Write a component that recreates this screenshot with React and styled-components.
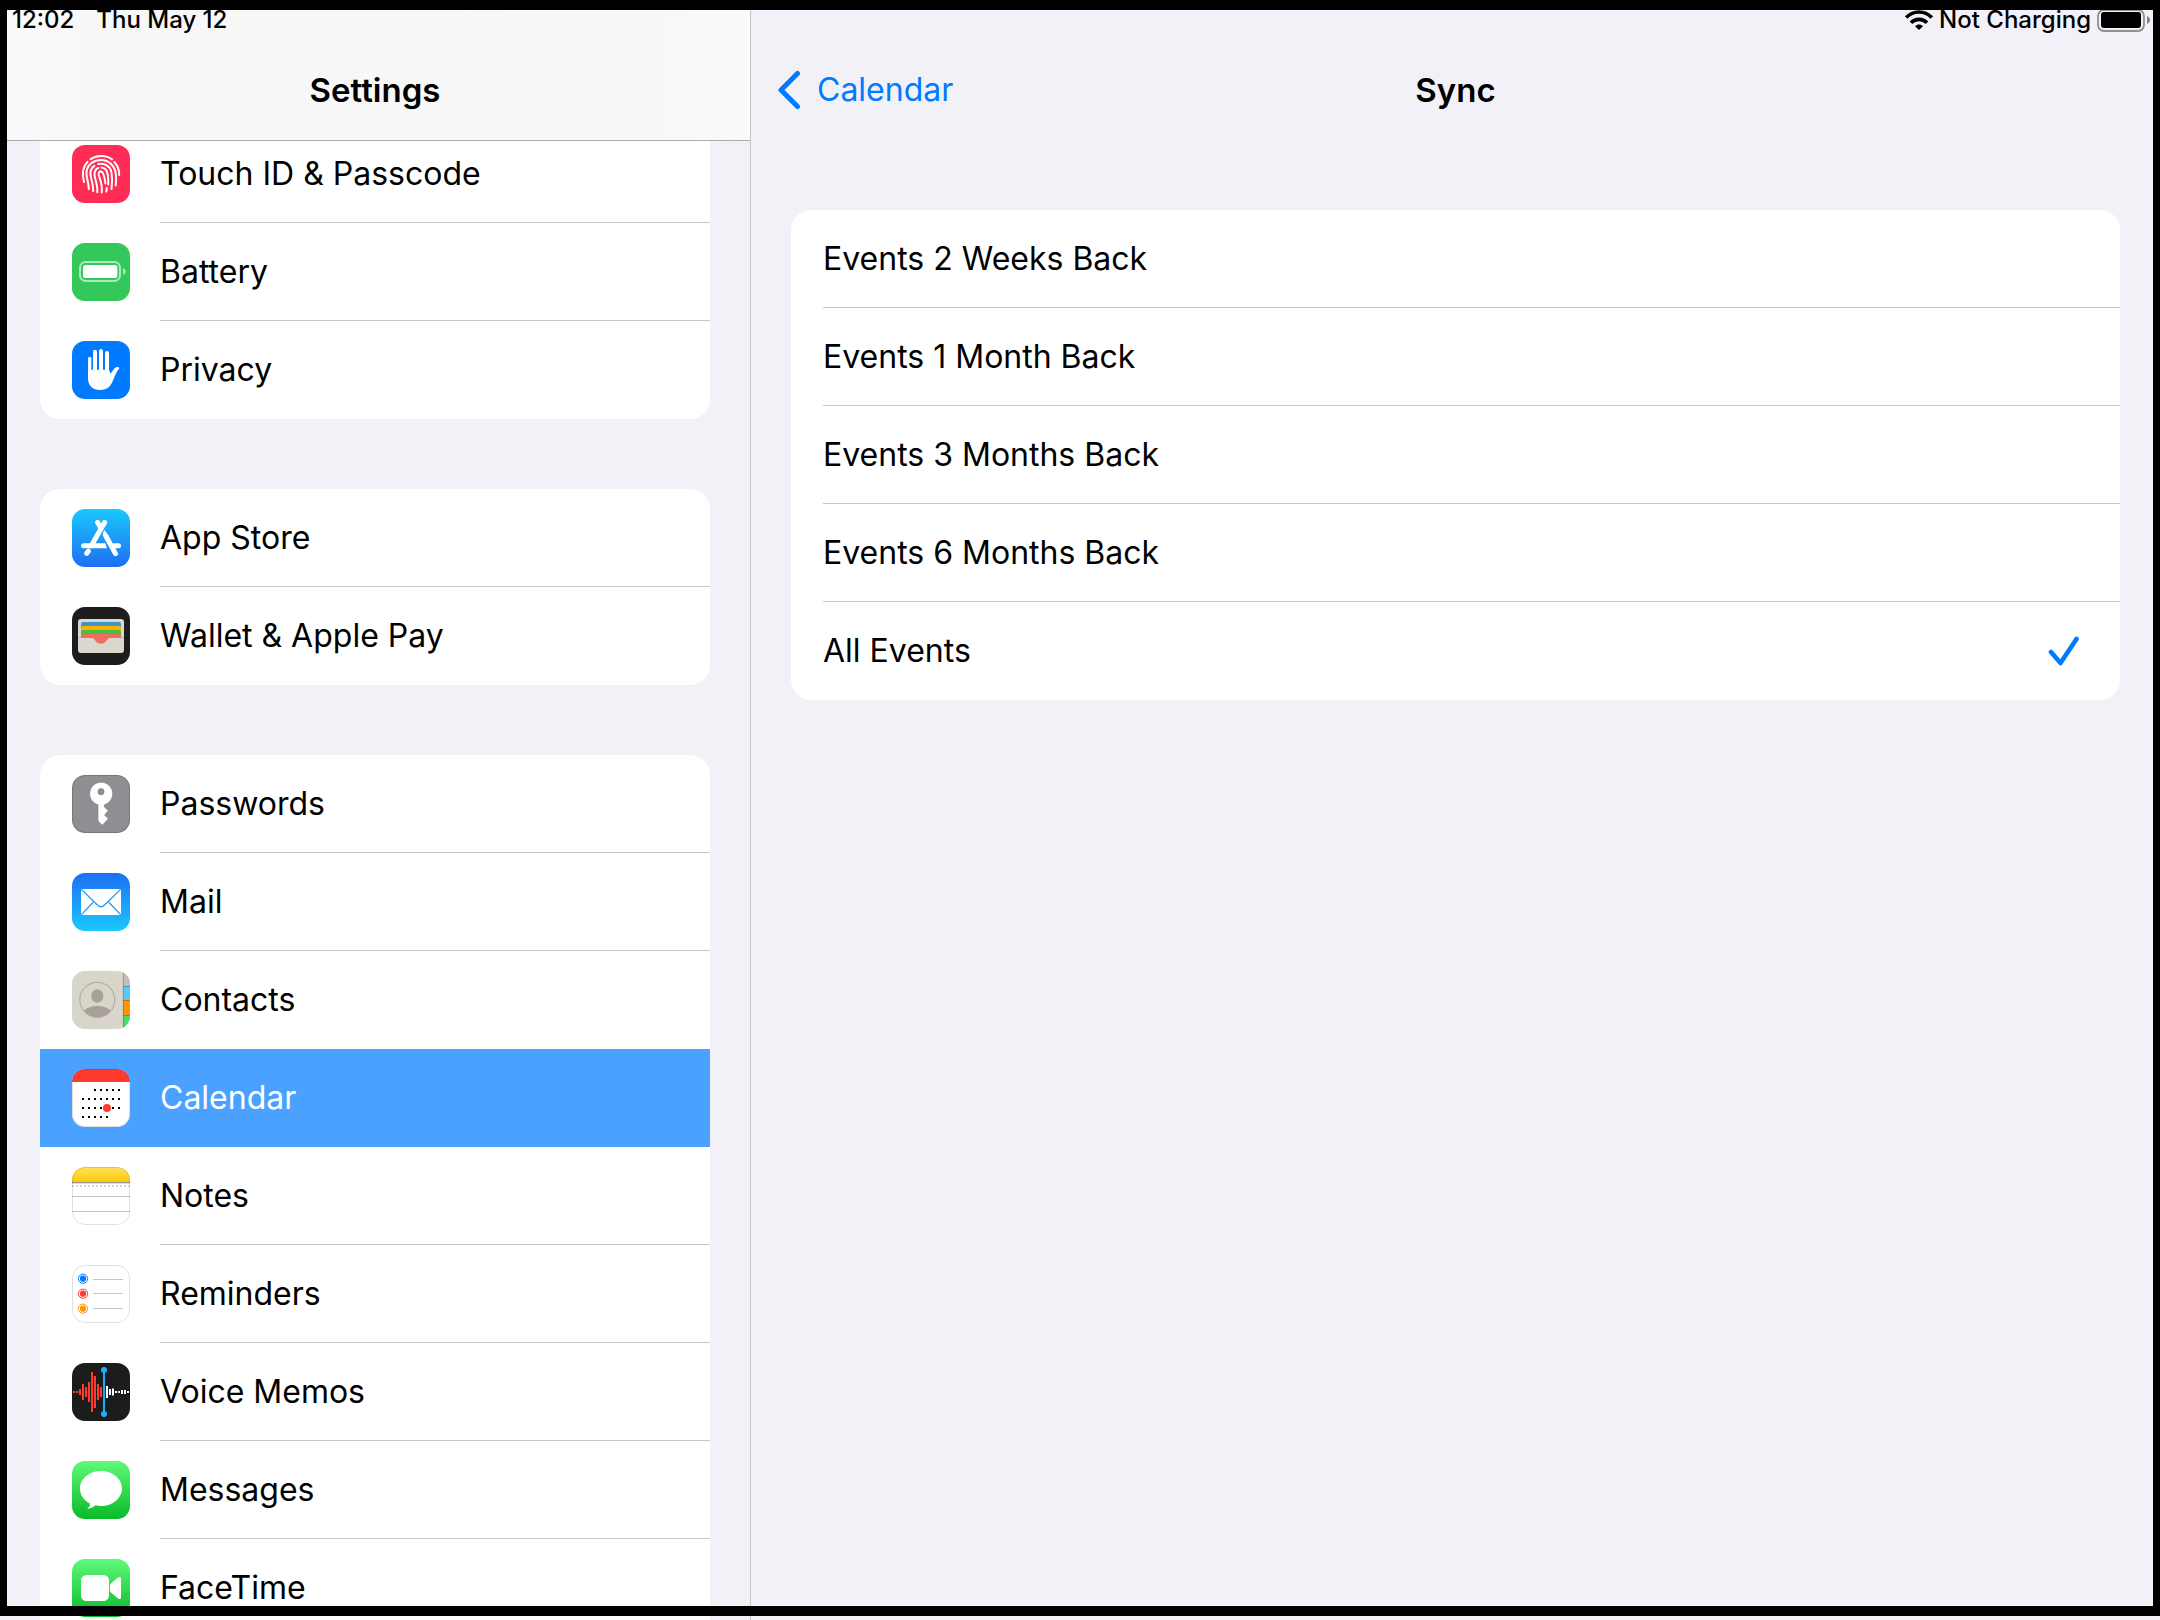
import React, { useState } from "react";
import styled, { createGlobalStyle } from "styled-components";

const GlobalStyle = createGlobalStyle`
  *, *::before, *::after { box-sizing: border-box; }
  body {
    margin: 0;
    background: #f2f1f7;
    color: #000;
    font-family: Inter, "Liberation Sans", sans-serif;
    font-size: 32px;
    line-height: 40px;
  }
`;

const Screen = styled.div`
  display: grid;
  grid-template-columns: 751px minmax(0, 1fr);
  height: 100vh;
  overflow: hidden;
`;

const Bezel = styled.div`
  position: fixed;
  inset: 0 0 4px;
  z-index: 2;
  border: solid #000;
  border-width: 10px 7px;
  pointer-events: none;
`;

const Sidebar = styled.aside`
  display: flex;
  flex-direction: column;
  min-height: 0;
  border-right: 1px solid #c6c6c8;
`;

const SidebarHeader = styled.header`
  flex: none;
  background: linear-gradient(90deg, #fafafd, #f7f7f7 16%, #f8f8f8 88%, #fafafb);
  border-bottom: 1px solid #adadb0;
`;

const StatusBar = styled.div`
  display: flex;
  align-items: center;
  justify-content: ${(p) => (p.$end ? "flex-end" : "flex-start")};
  gap: ${(p) => (p.$end ? "6px" : "22px")};
  height: 40px;
  padding: 0 ${(p) => (p.$end ? "9px" : "12px")};
  font-size: 24px;
  font-weight: 500;
  line-height: 40px;
  white-space: nowrap;
`;

const NavBar = styled.div`
  display: grid;
  grid-template-columns: 1fr auto 1fr;
  align-items: center;
  height: 100px;
  padding: 0 26px;
`;

const Title = styled.h1`
  grid-column: 2;
  margin: 0;
  font-size: 33px;
  font-weight: 600;
  line-height: 40px;
`;

const BackLink = styled.a`
  display: flex;
  align-items: center;
  gap: 16px;
  color: #007aff;
  text-decoration: none;
`;

const ScrollArea = styled.nav`
  flex: 1;
  min-height: 0;
  overflow: hidden;
`;

const Groups = styled.div`
  display: flex;
  flex-direction: column;
  gap: 70px;
  margin-top: -16px;
  padding: 0 40px;
`;

const Card = styled.div`
  overflow: hidden;
  background: #fff;
  border-radius: ${(p) => (p.$continued ? "0 0 20px 20px" : "20px")};
`;

const Label = styled.span`
  display: flex;
  flex: 1;
  align-items: center;
  align-self: stretch;
  border-bottom: 1px solid #c6c6c8;
`;

const MenuLink = styled.a`
  display: flex;
  align-items: center;
  gap: 30px;
  height: 98px;
  padding-left: 32px;
  color: ${(p) => (p.$selected ? "#fff" : "#000")};
  background: ${(p) => (p.$selected ? "#4ba1ff" : "transparent")};
  text-decoration: none;

  ${Label} {
    border-bottom-color: ${(p) => (p.$plain ? "transparent" : "#c6c6c8")};
  }
`;

const Detail = styled.main`
  min-width: 0;
`;

const OptionList = styled.fieldset`
  margin: 70px 40px 0;
  padding: 0;
  overflow: hidden;
  background: #fff;
  border: 0;
  border-radius: 20px;
`;

const Check = styled.svg`
  width: 32px;
  height: 32px;
  margin-left: auto;
  visibility: hidden;
`;

const Radio = styled.input`
  position: absolute;
  opacity: 0;
  pointer-events: none;

  &:checked + ${Label} ${Check} {
    visibility: visible;
  }
`;

const Option = styled.label`
  position: relative;
  display: flex;
  height: 98px;
  padding-left: 32px;

  ${Label} {
    padding-right: 40px;
  }

  &:last-child ${Label} {
    border-bottom-color: transparent;
  }
`;

const IconSvg = styled.svg`
  flex: none;
  width: 58px;
  height: 58px;
  border-radius: 13px;
`;

function Tile({ id, fill, from, to, edge, children }) {
  return (
    <IconSvg viewBox="0 0 58 58" aria-hidden="true">
      {from && (
        <defs>
          <linearGradient id={id} x1="0" y1="0" x2="0" y2="1">
            <stop offset="0" stopColor={from} />
            <stop offset="1" stopColor={to} />
          </linearGradient>
        </defs>
      )}
      <rect width="58" height="58" fill={from ? `url(#${id})` : fill} />
      {children}
      {edge && (
        <rect x="0.5" y="0.5" width="57" height="57" rx="12.5" fill="none" stroke="#000" strokeOpacity={edge} />
      )}
    </IconSvg>
  );
}

const TouchIdIcon = () => (
  <Tile fill="#ff2d55">
    <g fill="none" stroke="#fff" strokeWidth="2" strokeLinecap="round">
      <path d="M18.5 14.2C25 9.8 34 9.8 40 14.4" />
      <path d="M15.6 16.8C11 21.5 9.6 28 12 37" />
      <path d="M42.4 17C45.5 20.5 47.3 25 47.2 30" />
      <path d="M16.8 44C16.6 36 13.6 31.5 14.6 26C16 19 22 15 29 15C37 15 43 21 43.8 29C44.2 33 44.2 37 43.7 40.5" />
      <path d="M21.2 46C21.6 38 17.5 32 18.6 26.5C19 24 20.3 22.2 22.4 20.8" />
      <path d="M26 19.1C32 17.5 38 21 39.4 27C40.3 32 40.3 38 39.5 44" />
      <path d="M25.2 47.2C26.2 39 21.8 33 22.6 28C23.2 24.6 24.8 23.2 26.4 22.9M29.5 22.6C33.4 22.8 35.2 26 35.8 30C36.3 33.5 36.4 36.5 36.2 39.5" />
      <path d="M29.7 47.4C30.8 40 28.4 35 26.7 30C26.2 27.3 27.7 26.2 29.2 26.4C31.8 27 32.8 33.5 33.4 38.5" />
      <path d="M34.8 43L34.3 46.5" />
    </g>
  </Tile>
);

const BatteryIcon = () => (
  <Tile fill="#34c759">
    <rect x="8" y="19" width="40" height="19" rx="5.5" fill="none" stroke="#fff" strokeOpacity="0.6" strokeWidth="2" />
    <rect x="11" y="22" width="34.4" height="13" rx="2.6" fill="#fff" />
    <path d="M51 25C54.6 26.5 54.6 30.5 51 32Z" fill="#fff" fillOpacity="0.6" />
  </Tile>
);

const PrivacyIcon = () => (
  <Tile fill="#007aff">
    <g stroke="#fff" strokeLinecap="round" fill="none">
      <path d="M17.7 17.5V32" strokeWidth="3.3" />
      <path d="M23 10.8V34M29 10V34M35 12V34" strokeWidth="4" />
    </g>
    <path
      fill="#fff"
      d="M16 28.8H37L38.4 32.7L42.4 27.6C44 25.8 46.6 25.4 47.4 27.2C44.5 30.5 43.2 34.3 41.3 38.8C38.6 45.6 35.2 49 28.6 49C20.3 49 16 44.6 16 37Z"
    />
  </Tile>
);

const AppStoreIcon = () => (
  <Tile id="appstore" from="#1ac8fc" to="#1e6ff1">
    <g stroke="#fff" strokeWidth="5" strokeLinecap="round" fill="none">
      <path d="M25.6 13.4L28.6 18.5" />
      <path d="M32.6 13.4L20 35.5" />
      <path d="M11.6 36.7H20" />
      <path d="M42 36.7H46.5" />
      <path d="M34.6 28.2L43.5 44.6" />
      <path d="M14.6 44.4L16.4 42.2" />
    </g>
    <path fill="#fff" d="M18 34.2H33.4L34.9 39.2H18ZM32.5 21L37 27.4L33 30.5L30.7 26.2Q30.8 23 32.5 21Z" />
  </Tile>
);

const WalletIcon = () => (
  <Tile fill="#1d1d1d">
    <rect x="6" y="12" width="46" height="34" rx="3" fill="#dad7cc" />
    <path d="M9 31V17Q9 15 11 15H47Q49 15 49 17V31Z" fill="#3b99c9" />
    <path d="M9 31V21Q9 19 11 19H47Q49 19 49 21V31Z" fill="#ffb003" />
    <path d="M9 31V25Q9 23 11 23H47Q49 23 49 25V31Z" fill="#45c03f" />
    <path d="M9 31V29Q9 27 11 27H47Q49 27 49 29V31H38C34.6 31.4 34.4 36.8 29 36.8C23.6 36.8 23.4 31.4 20 31Z" fill="#f26d5f" />
    <path d="M6 30.5H9M49 30.5H52" stroke="#b9b6ab" />
  </Tile>
);

const PasswordsIcon = () => (
  <Tile fill="#8e8e93" edge="0.16">
    <path
      fill="#fff"
      fillRule="evenodd"
      stroke="#7d7d82"
      strokeWidth="0.6"
      d="M26 29.8A11.5 11.5 0 1 1 32.3 29.8V32L36.3 35.6L32.6 40L36.3 43.8L30.3 50.2L26 46ZM29 13.6A3.1 3.1 0 1 0 29 19.8A3.1 3.1 0 1 0 29 13.6Z"
    />
  </Tile>
);

const MailIcon = () => (
  <Tile id="mail" from="#1e6ff2" to="#1ac8fe">
    <rect x="9" y="16" width="40" height="26" rx="1" fill="#fff" />
    <g fill="none" stroke="#2196f8" strokeWidth="1.3">
      <path d="M9.4 16.4L24.6 31.2C27.6 34.8 30.4 34.8 33.4 31.2L48.6 16.4" />
      <path d="M9.4 41.6L21.2 29.2M48.6 41.6L36.8 29.2" />
    </g>
  </Tile>
);

const ContactsIcon = () => (
  <Tile fill="#d8d5cb">
    <defs>
      <clipPath id="avatar">
        <circle cx="25.3" cy="28.8" r="17.5" />
      </clipPath>
    </defs>
    <circle cx="25.3" cy="28.8" r="17.5" fill="none" stroke="#aca299" />
    <ellipse cx="25.3" cy="25" rx="6.1" ry="6.8" fill="#a9a09a" />
    <ellipse cx="25.3" cy="44" rx="15" ry="9.2" fill="#a9a09a" clipPath="url(#avatar)" />
    <rect x="51" width="7" height="15" fill="#c2beb8" />
    <rect x="51" y="15" width="7" height="14" fill="#5ac8fa" />
    <rect x="51" y="29" width="7" height="15" fill="#ff9500" />
    <rect x="51" y="44" width="7" height="14" fill="#4cd964" />
    <path d="M51 15.4H58M51 29.4H58M51 44.4H58M51.3 0V58" stroke="#000" strokeOpacity="0.28" strokeWidth="0.8" />
  </Tile>
);

const calendarDots = [
  [21, [23, 29, 35, 41, 47]],
  [30, [11, 17, 23, 29, 35, 41, 47]],
  [39, [11, 17, 23, 29, 35, 41, 47]],
  [48, [11, 17, 23, 29, 35]],
];

const CalendarIcon = () => (
  <Tile fill="#fff" edge="0.12">
    <rect width="58" height="13" fill="#ff3b30" />
    {calendarDots.map(([y, xs]) =>
      xs.map((x) => <rect key={`${x}-${y}`} x={x - 1} y={y - 1} width="2" height="2" />)
    )}
    <circle cx="35" cy="39" r="4" fill="#ff3b30" />
  </Tile>
);

const NotesIcon = () => (
  <Tile fill="#fff" edge="0.12">
    <defs>
      <linearGradient id="notes" x1="0" y1="0" x2="0" y2="1">
        <stop offset="0" stopColor="#ffdf5e" />
        <stop offset="1" stopColor="#ffcc05" />
      </linearGradient>
    </defs>
    <rect width="58" height="15" fill="url(#notes)" />
    <rect y="15" width="58" height="1" fill="#99958a" />
    <rect y="16" width="58" height="1" fill="#dcdcdc" />
    <path d="M0 19H58" stroke="#d6d6d6" strokeWidth="2" strokeDasharray="2 2" />
    <path d="M0 29.5H58M0 44.5H58" stroke="#c4c4c6" />
  </Tile>
);

const RemindersIcon = () => (
  <Tile fill="#fff" edge="0.12">
    {[
      [13.7, 14.5, "#007aff"],
      [28.7, 28.5, "#ff3b30"],
      [43.7, 43.5, "#ff9500"],
    ].map(([y, line, color]) => (
      <g key={color}>
        <circle cx="11" cy={y} r="4.6" fill="none" stroke={color} />
        <circle cx="11" cy={y} r="3.1" fill={color} />
        <path d={`M21 ${line}H51`} stroke="#c6c6c8" />
      </g>
    ))}
  </Tile>
);

const playedBars = [1, 1, 3, 8, 5, 10, 20, 16, 8, 5];
const restBars = [6, 3, 3.5, 1, 1, 2, 2, 1];

const VoiceMemosIcon = () => (
  <Tile fill="#1c1c1c">
    {playedBars.map((h, i) => (
      <rect key={i} x={1 + i * 3} y={29 - h} width="2" height={h * 2} fill="#ff3b30" />
    ))}
    {restBars.map((h, i) => (
      <rect key={i} x={34 + i * 3} y={29 - h} width="2" height={h * 2} fill="#fff" />
    ))}
    <rect x="31" y="7" width="2" height="44" fill="#1badf8" />
    <circle cx="32" cy="7" r="3" fill="#1badf8" />
    <circle cx="32" cy="51" r="3" fill="#1badf8" />
  </Tile>
);

const MessagesIcon = () => (
  <Tile id="messages" from="#5ff97a" to="#0aba28">
    <path
      fill="#fff"
      d="M29 10C40.6 10 50 17.7 50 27.4C50 37.1 40.6 44.9 29 44.9C27 44.9 25.2 44.7 23.5 44.3C21 46.5 18.5 47.8 15.2 47.9C17 46.4 18 44.6 18 42.4C11.8 39.3 8 33.8 8 27.4C8 17.7 17.4 10 29 10Z"
    />
  </Tile>
);

const FaceTimeIcon = () => (
  <Tile id="facetime" from="#5ff97a" to="#0aba28">
    <rect x="9" y="16" width="28" height="26" rx="5.5" fill="#fff" />
    <path fill="#fff" d="M38 26.5Q38 25.4 39 24.5L46 18.5Q49 16.8 49 19.8V38.2Q49 41.2 46 39.5L39 33.5Q38 32.6 38 31.5Z" />
  </Tile>
);

const groups = [
  [
    ["Touch ID & Passcode", TouchIdIcon],
    ["Battery", BatteryIcon],
    ["Privacy", PrivacyIcon],
  ],
  [
    ["App Store", AppStoreIcon],
    ["Wallet & Apple Pay", WalletIcon],
  ],
  [
    ["Passwords", PasswordsIcon],
    ["Mail", MailIcon],
    ["Contacts", ContactsIcon],
    ["Calendar", CalendarIcon],
    ["Notes", NotesIcon],
    ["Reminders", RemindersIcon],
    ["Voice Memos", VoiceMemosIcon],
    ["Messages", MessagesIcon],
    ["FaceTime", FaceTimeIcon],
  ],
];

const selectedItem = "Calendar";

const syncOptions = [
  "Events 2 Weeks Back",
  "Events 1 Month Back",
  "Events 3 Months Back",
  "Events 6 Months Back",
  "All Events",
];

const WifiGlyph = () => (
  <svg width="28" height="20" viewBox="0 0 28 20" aria-hidden="true">
    <g fill="none" stroke="#000" strokeWidth="3.6">
      <path d="M1.2 7.6C8.2 0.2 19.8 0.2 26.8 7.6" />
      <path d="M6 12.8C10.4 8.2 17.6 8.2 22 12.8" />
    </g>
    <path d="M10 16.2C12.2 13.8 15.8 13.8 18 16.2L14 20Z" />
  </svg>
);

const BatteryGlyph = () => (
  <svg width="54" height="24" viewBox="0 0 54 24" aria-hidden="true">
    <rect x="1" y="2" width="46" height="21" rx="6" fill="none" stroke="#000" strokeOpacity="0.4" strokeWidth="1.8" />
    <rect x="4" y="4" width="40" height="16" rx="3" />
    <path d="M50 8C54 9.5 54 14.5 50 16Z" fillOpacity="0.45" />
  </svg>
);

export default function App() {
  const [sync, setSync] = useState("All Events");

  return (
    <>
      <GlobalStyle />
      <Screen>
        <Sidebar>
          <SidebarHeader>
            <StatusBar>
              <span>12:02</span>
              <span>Thu May 12</span>
            </StatusBar>
            <NavBar>
              <Title>Settings</Title>
            </NavBar>
          </SidebarHeader>
          <ScrollArea aria-label="Settings">
            <Groups>
              {groups.map((items, g) => (
                <Card key={g} $continued={g === 0}>
                  {items.map(([name, Icon], i) => {
                    const selected = name === selectedItem;
                    const next = items[i + 1];
                    return (
                      <MenuLink
                        key={name}
                        href="#"
                        $selected={selected}
                        $plain={selected || !next || next[0] === selectedItem}
                        aria-current={selected ? "page" : undefined}
                      >
                        <Icon />
                        <Label>{name}</Label>
                      </MenuLink>
                    );
                  })}
                </Card>
              ))}
            </Groups>
          </ScrollArea>
        </Sidebar>
        <Detail>
          <StatusBar $end>
            <WifiGlyph />
            <span>Not Charging</span>
            <BatteryGlyph />
          </StatusBar>
          <NavBar>
            <BackLink href="#">
              <svg width="24" height="40" viewBox="0 0 24 40" aria-hidden="true">
                <path d="M20.5 3.5L4 20L20.5 36.5" fill="none" stroke="#007aff" strokeWidth="5" strokeLinecap="round" strokeLinejoin="round" />
              </svg>
              Calendar
            </BackLink>
            <Title>Sync</Title>
          </NavBar>
          <OptionList aria-label="Sync">
            {syncOptions.map((name) => (
              <Option key={name}>
                <Radio type="radio" name="sync" checked={sync === name} onChange={() => setSync(name)} />
                <Label>
                  {name}
                  <Check viewBox="0 0 32 32" aria-hidden="true">
                    <path d="M3 17L12.5 28L28.5 4" fill="none" stroke="#007aff" strokeWidth="4.6" strokeLinecap="round" strokeLinejoin="round" />
                  </Check>
                </Label>
              </Option>
            ))}
          </OptionList>
        </Detail>
      </Screen>
      <Bezel />
    </>
  );
}
